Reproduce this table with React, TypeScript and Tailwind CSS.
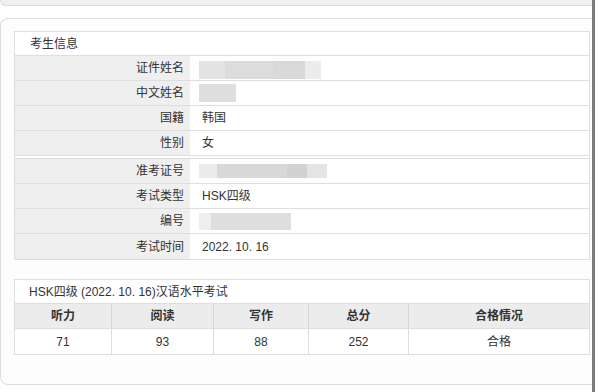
import React from "react";

const font = { fontFamily: '"Liberation Sans", "Noto Sans CJK SC", sans-serif' };

// 个人信息两组，没有 value 的格子显示打码的灰块
type Row = { label: string; value?: string; mask?: React.ReactNode };

const personal: Row[] = [
  {
    label: "证件姓名",
    mask: (
      <div className="flex h-[18px] mt-[4px]">
        <div className="w-[26px] bg-[#e3e3e3]" />
        <div className="w-[48px] bg-[#dcdcdc]" />
        <div className="w-[32px] bg-[#d9d9d9]" />
        <div className="w-[16px] bg-[#ececec]" />
      </div>
    ),
  },
  {
    label: "中文姓名",
    mask: <div className="h-[18px] w-[37px] bg-[#dedede]" />,
  },
  { label: "国籍", value: "韩国" },
  { label: "性别", value: "女" },
];

const exam: Row[] = [
  {
    label: "准考证号",
    mask: (
      <div className="flex h-[14px]">
        <div className="w-[18px] bg-[#ebebeb]" />
        <div className="w-[70px] bg-[#d8d8d8]" />
        <div className="w-[20px] bg-[#d2d2d2]" />
        <div className="w-[20px] bg-[#e4e4e4]" />
      </div>
    ),
  },
  { label: "考试类型", value: "HSK四级" },
  {
    label: "编号",
    mask: (
      <div className="flex h-[17px]">
        <div className="w-[12px] bg-[#eeeeee]" />
        <div className="w-[80px] bg-[#dedede]" />
      </div>
    ),
  },
  { label: "考试时间", value: "2022. 10. 16" },
];

const scores = [
  { name: "听力", value: "71", w: "w-[96px]" },
  { name: "阅读", value: "93", w: "w-[102px]" },
  { name: "写作", value: "88", w: "w-[95px]" },
  { name: "总分", value: "252", w: "w-[100px]" },
  { name: "合格情况", value: "合格", w: "flex-1" },
];

function InfoRow({ row, last }: { row: Row; last?: boolean }) {
  return (
    <div className={`flex h-[25px] ${last ? "" : "border-b border-[#dedede]"}`}>
      <div className="w-[175px] bg-[#efefef] flex items-center justify-end pr-[6px] text-[12px] text-[#333]">
        {row.label}
      </div>
      <div className="flex-1 flex items-center pl-[12px] text-[12px] text-[#333]">
        {row.value ?? <div className="-ml-[3px]">{row.mask}</div>}
      </div>
    </div>
  );
}

export default function App() {
  return (
    <div className="flex h-[392px] w-[600px] overflow-hidden bg-white" style={font}>
      <div className="w-[592px] flex flex-col">
        {/* 上一张卡片的底边 */}
        <div className="h-[6px] bg-[#f0f0f0] border-b border-l border-[#dcdcdc] rounded-bl-lg" />

        <div className="mt-[12px] h-[367px] border border-r-0 border-[#dcdcdc] rounded-l-lg bg-[#fdfdfd] pl-[13px] pt-[12px] pr-[2px]">
          {/* 考生信息 */}
          <div className="border border-[#dedede] bg-white">
            <div className="h-[24px] border-b border-[#dedede] flex items-center pl-[15px] text-[12px] text-[#333]">
              考生信息
            </div>
            {personal.map((r) => (
              <InfoRow key={r.label} row={r} />
            ))}
            <div className="h-[3px] border-b border-[#dedede]" />
            {exam.map((r, i) => (
              <InfoRow key={r.label} row={r} last={i === exam.length - 1} />
            ))}
          </div>

          {/* 成绩 */}
          <div className="mt-[19px] border border-[#dedede] bg-white">
            <div className="h-[24px] border-b border-[#dedede] flex items-center pl-[14px] text-[12px] text-[#333]">
              HSK四级 (2022. 10. 16)汉语水平考试
            </div>
            <div className="flex h-[25px] bg-[#ececec] border-b border-[#dedede]">
              {scores.map((s, i) => (
                <div
                  key={s.name}
                  className={`${s.w} flex items-center justify-center text-[12px] font-semibold text-[#333] ${i > 0 ? "border-l border-[#d6d6d6]" : ""}`}
                >
                  {s.name}
                </div>
              ))}
            </div>
            <div className="flex h-[25px]">
              {scores.map((s, i) => (
                <div
                  key={s.name}
                  className={`${s.w} flex items-center justify-center text-[12px] text-[#333] ${i > 0 ? "border-l border-[#dedede]" : ""}`}
                >
                  {s.value}
                </div>
              ))}
            </div>
          </div>
        </div>
      </div>
      <div className="w-[3px] bg-[#7c7c7c]" />
    </div>
  );
}
